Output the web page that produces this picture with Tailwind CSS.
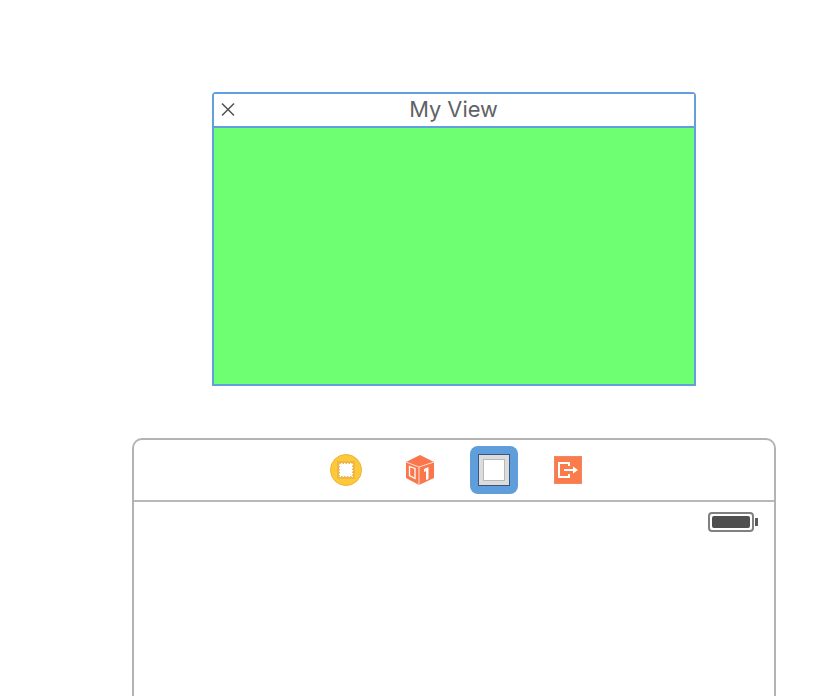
<!DOCTYPE html>
<html lang="en">
<head>
    <meta charset="UTF-8">
    <meta name="viewport" content="width=device-width, initial-scale=1.0">
    <title>My View</title>
    <script src="https://cdn.jsdelivr.net/npm/@tailwindcss/browser@4"></script>
</head>
<body class="bg-white h-[696px] overflow-hidden font-['Inter',sans-serif]">

    <!-- scene dock view -->
    <div class="pt-[92px] pl-[212px]">
        <div class="w-[484px] h-[294px] flex flex-col border-2 border-[#639fdc] rounded-t-[4px]">
            <div class="h-[34px] relative flex items-center justify-center bg-white border-b-2 border-[#639fdc]">
                <svg class="absolute left-[7px] top-[8px]" width="14" height="15" viewBox="0 0 14 15" fill="none" stroke="#4f5256" stroke-width="1.5">
                    <path d="M1 1.5 L13 13.5 M13 1.5 L1 13.5"/>
                </svg>
                <span class="text-[21.8px] leading-none text-[#5f6266] -ml-[1px]">My View</span>
            </div>
            <div class="flex-1 bg-[#6fff72]"></div>
        </div>
    </div>

    <!-- view controller -->
    <div class="mt-[52px] ml-[132px] w-[644px] h-[258px] border-2 border-b-0 border-[#b3b3b3] rounded-t-[10px]">
        <div class="h-[62px] border-b-2 border-[#b8b8b8] relative flex items-center">
            <div class="flex items-center ml-[196px]">
                <div class="w-[32px] h-[32px] rounded-full bg-[#fdc83b] border border-[#eeb52e] flex items-center justify-center">
                    <div class="w-[18px] h-[18px] bg-[#f0b840] flex items-center justify-center">
                        <svg width="14" height="14" viewBox="0 0 14 14">
                            <rect width="14" height="14" fill="#ffffff"/>
                            <rect x="0.5" y="0.5" width="13" height="13" fill="none" stroke="#e2b65a" stroke-width="1" stroke-dasharray="1.5 1.5"/>
                        </svg>
                    </div>
                </div>
                <svg class="ml-[43px]" width="30" height="32" viewBox="0 0 30 32">
                    <path d="M15 1 L29 8 L29 24 L14 31 L1 24 L1 8 Z" fill="#fb774b"/>
                    <path d="M1 8 L14 13 L29 8 M14 13 L14 31" fill="none" stroke="#fde0d4" stroke-width="1"/>
                    <path d="M4.5 12.5 L10 14.5 L10 24.5 L4.5 21.5 Z" fill="none" stroke="#ffffff" stroke-width="1.3"/>
                    <path d="M19 15 L23.5 13 L23.5 25 L21 26.2 L21 17 L19 18 Z" fill="#ffffff"/>
                </svg>
                <div class="ml-[35px] w-[48px] h-[48px] rounded-[8px] bg-[#5f9ddb] flex items-center justify-center">
                    <div class="w-[32px] h-[32px] bg-[#dcdcdc] border border-[#34587f] flex items-center justify-center">
                        <div class="w-[22px] h-[22px] bg-white border border-[#b9b9b9]"></div>
                    </div>
                </div>
                <div class="ml-[36px] w-[28px] h-[28px] bg-[#fb7b4a] border border-[#ee8a63] flex items-center justify-center">
                    <svg width="22" height="18" viewBox="0 0 22 18" fill="none" stroke="#ffffff" stroke-width="2">
                        <path d="M12 5 L12 2 L2 2 L2 16 L12 16 L12 13"/>
                        <path d="M7 9 L17 9"/>
                        <path d="M16 5.5 L21 9 L16 12.5 Z" fill="#ffffff" stroke="none"/>
                    </svg>
                </div>
            </div>
        </div>
        <!-- status bar -->
        <div class="flex justify-end items-center pt-[10px] pr-[16px]">
            <div class="w-[46px] h-[20px] border-2 border-[#808080] rounded-[4px] p-[2px] bg-white">
                <div class="w-full h-full bg-[#4f4f4f] rounded-[2px]"></div>
            </div>
            <div class="w-[3px] h-[8px] bg-[#5a5a5a] ml-[1px]"></div>
        </div>
    </div>

</body>
</html>
